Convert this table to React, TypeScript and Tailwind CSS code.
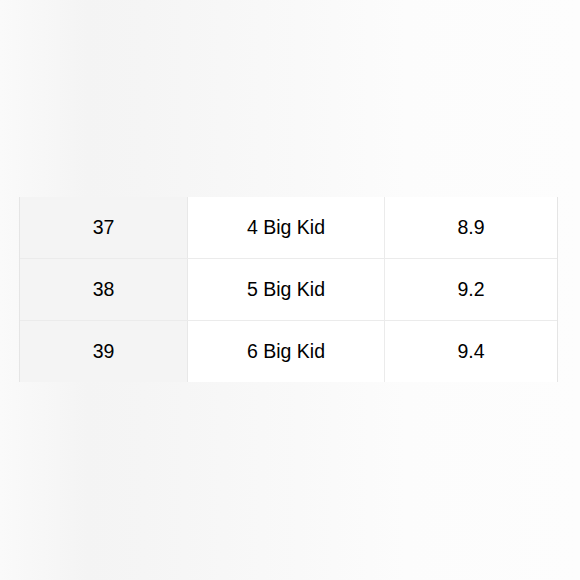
const rows = [
  ["37", "4 Big Kid", "8.9"],
  ["38", "5 Big Kid", "9.2"],
  ["39", "6 Big Kid", "9.4"],
];

export default function App() {
  return (
    <div className="w-[580px] h-[580px] flex flex-col bg-[linear-gradient(90deg,#fafafa_0%,#f4f4f4_15%,#f5f5f5_25%,#f8f8f8_45%,#fcfcfc_70%,#fdfdfd_100%)] font-['Liberation_Sans',Arial,sans-serif] text-black">
      <div className="h-[197px]" />
      <div className="ml-[19px] w-[539px] bg-white border-l border-r border-[#e5e5e5]">
        {rows.map((r, i) => (
          <div
            key={r[0]}
            className={
              "grid grid-cols-[168px_197px_172px] " +
              (i < rows.length - 1 ? "h-[62px] border-b border-[#ebebeb]" : "h-[61px]")
            }
          >
            <div className="flex items-center justify-center bg-[#f4f4f4] border-r border-[#e8e8e8] text-[19.5px]">
              {r[0]}
            </div>
            <div className="flex items-center justify-center border-r border-[#ebebeb] text-[19.5px]">
              {r[1]}
            </div>
            <div className="flex items-center justify-center text-[19.5px]">
              {r[2]}
            </div>
          </div>
        ))}
      </div>
      <div className="flex-1" />
    </div>
  );
}
